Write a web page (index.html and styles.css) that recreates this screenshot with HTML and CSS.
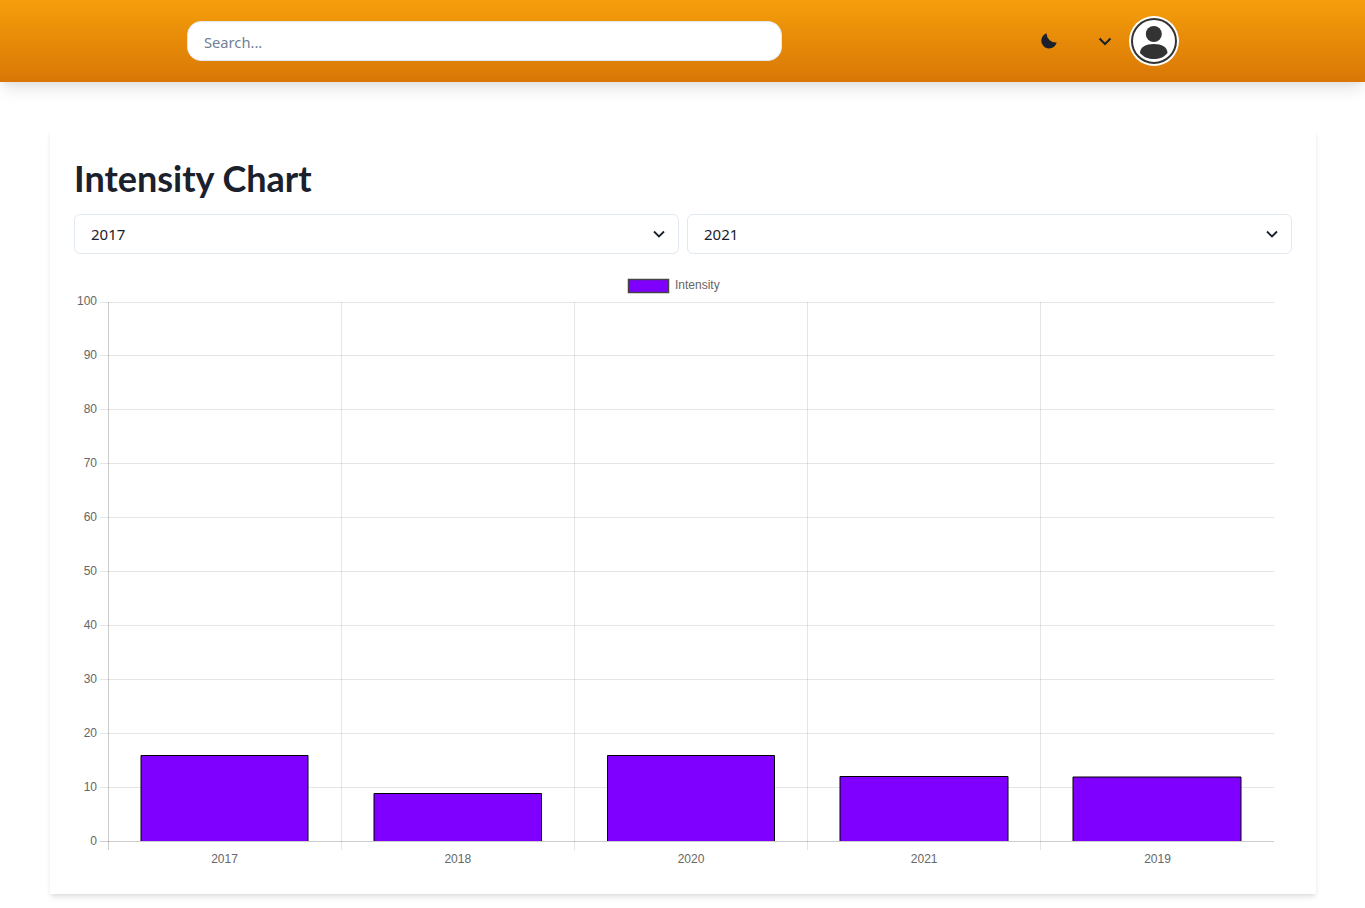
FILE: index.html
```html
<!DOCTYPE html>
<html>
    <head>
        <meta charset="utf-8">
        <title>Intensity Chart</title>
        <link rel="stylesheet" href="styles.css">
    </head>
    <body>
        <!-- top bar -->
        <header class="topbar">
            <input class="search" type="text" placeholder="Search...">
            <div class="actions">
                <svg class="moon" width="16" height="16" viewBox="0 0 16 16">
                    <path d="M5.500 .3A7.800 7.800 0 1 0 15.700 9.500 9.300 9.300 0 0 1 5.500 .3Z" fill="#1a202c"/>
                </svg>
                <svg class="chevron" width="16" height="16" viewBox="0 0 16 16">
                    <path d="M2.500 5.500 8 11l5.500-5.500" fill="none" stroke="#1a202c" stroke-width="2"/>
                </svg>
                <svg class="avatar" width="50" height="50" viewBox="0 0 50 50">
                    <circle cx="25" cy="25" r="25" fill="#fff"/>
                    <circle cx="25" cy="25" r="22" fill="none" stroke="#333" stroke-width="2"/>
                    <circle cx="24.800" cy="18" r="8" fill="#333"/>
                    <path d="M11 37C11 31 17 28 24.800 28S38.500 31 38.500 37C35 41.500 30 43 24.800 43S15 41.500 11 37Z" fill="#333"/>
                </svg>
            </div>
        </header>

        <!-- chart card -->
        <main class="card">
            <h1 class="title">Intensity Chart</h1>
            <div class="filters">
                <select class="select"><option>2017</option></select>
                <select class="select"><option>2021</option></select>
            </div>
            <svg class="chart" width="1218" height="600" viewBox="74 270 1218 600">
                <!-- legend -->
                <rect class="legend-box" x="628.500" y="279.500" width="40" height="13"/>
                <text class="label" x="675" y="289">Intensity</text>

                <!-- grid -->
                <path class="grid" d="M100 302.500H1274M100 355.500H1274M100 409.500H1274M100 463.500H1274M100 517.500H1274M100 571.500H1274M100 625.500H1274M100 679.500H1274M100 733.500H1274M100 787.500H1274"/>
                <path class="grid" d="M341.500 302V850M574.500 302V850M807.500 302V850M1040.500 302V850"/>

                <!-- bars, no border on the bottom side -->
                <path class="bar" d="M141 841V755.500H308V841"/>
                <path class="bar" d="M374 841V793.500H541.500V841"/>
                <path class="bar" d="M607.500 841V755.500H774.500V841"/>
                <path class="bar" d="M840 841V776.500H1008V841"/>
                <path class="bar" d="M1073 841V777H1241V841"/>

                <path class="axis" d="M108.500 302V850M100 841.500H1274"/>

                <!-- y labels -->
                <g class="ylabels">
                    <text class="label" x="97" y="305">100</text>
                    <text class="label" x="97" y="359">90</text>
                    <text class="label" x="97" y="413">80</text>
                    <text class="label" x="97" y="467">70</text>
                    <text class="label" x="97" y="521">60</text>
                    <text class="label" x="97" y="575">50</text>
                    <text class="label" x="97" y="629">40</text>
                    <text class="label" x="97" y="683">30</text>
                    <text class="label" x="97" y="737">20</text>
                    <text class="label" x="97" y="791">10</text>
                    <text class="label" x="97" y="845">0</text>
                </g>

                <!-- x labels -->
                <g class="xlabels">
                    <text class="label" x="224.500" y="863">2017</text>
                    <text class="label" x="457.800" y="863">2018</text>
                    <text class="label" x="691" y="863">2020</text>
                    <text class="label" x="924.200" y="863">2021</text>
                    <text class="label" x="1157.500" y="863">2019</text>
                </g>
            </svg>
        </main>
    </body>
</html>
```

FILE: styles.css
```css
*{
    margin: 0;
    padding: 0;
    box-sizing: border-box;
}
body{
    font-family: "Noto Sans", "Open Sans", sans-serif;
    color: #1a202c;
    background-color: #fff;
}
/* top bar */
.topbar{
    height: 82px;
    padding-left: 187px;
    display: flex;
    align-items: center;
    background-image: linear-gradient(to bottom, #f59e0b, #d97706);
    box-shadow: 0 10px 15px -3px rgba(0,0,0,0.1), 0 4px 6px -2px rgba(0,0,0,0.05);
}
.search{
    width: 595px;
    height: 40px;
    padding: 1px 16px 0;
    border: 1px solid #e2e8f0;
    border-radius: 14px;
    background-color: #fff;
    font-family: inherit;
    font-size: 14.700px;
    outline: none;
}
.search::placeholder{
    color: #718096;
    opacity: 1;
}
.actions{
    margin-left: 259px;
    display: flex;
    align-items: center;
}
.chevron{
    margin-left: 40px;
}
.avatar{
    margin-left: 16px;
}
/* card */
.card{
    width: 1266px;
    height: 764px;
    margin: 48px 0 14px 50px;
    padding: 24px;
    background-color: #fff;
    box-shadow: 0 4px 6px -1px rgba(0,0,0,0.1), 0 2px 4px -1px rgba(0,0,0,0.06);
}
.title{
    font-family: Lato, "Noto Sans", sans-serif;
    font-size: 36px;
    line-height: 48px;
    font-weight: 700;
    margin-bottom: 12px;
}
.filters{
    display: flex;
    gap: 8px;
    margin-bottom: 16px;
}
.select{
    flex: 1;
    height: 40px;
    padding: 0 16px;
    border: 1px solid #e2e8f0;
    border-radius: 6px;
    font-family: inherit;
    font-size: 15px;
    color: #1a202c;
    appearance: none;
    background: #fff url("data:image/svg+xml,%3Csvg xmlns='http://www.w3.org/2000/svg' width='12' height='8' viewBox='0 0 12 8'%3E%3Cpath d='M1 1.500 6 6.500 11 1.500' fill='none' stroke='%231a202c' stroke-width='1.800'/%3E%3C/svg%3E") no-repeat right 13px center;
}
/* chart */
.chart{
    display: block;
}
.label{
    font-family: "Liberation Sans", Arial, sans-serif;
    font-size: 12px;
    fill: #666;
}
.ylabels{
    text-anchor: end;
}
.xlabels{
    text-anchor: middle;
}
.grid{
    fill: none;
    stroke: rgba(0,0,0,0.1);
}
.axis{
    fill: none;
    stroke: rgba(0,0,0,0.2);
}
.bar{
    fill: #7f00ff;
    stroke: #000;
    stroke-width: 1;
}
.legend-box{
    fill: #7f00ff;
    stroke: #444;
    stroke-width: 1.500;
}
```
